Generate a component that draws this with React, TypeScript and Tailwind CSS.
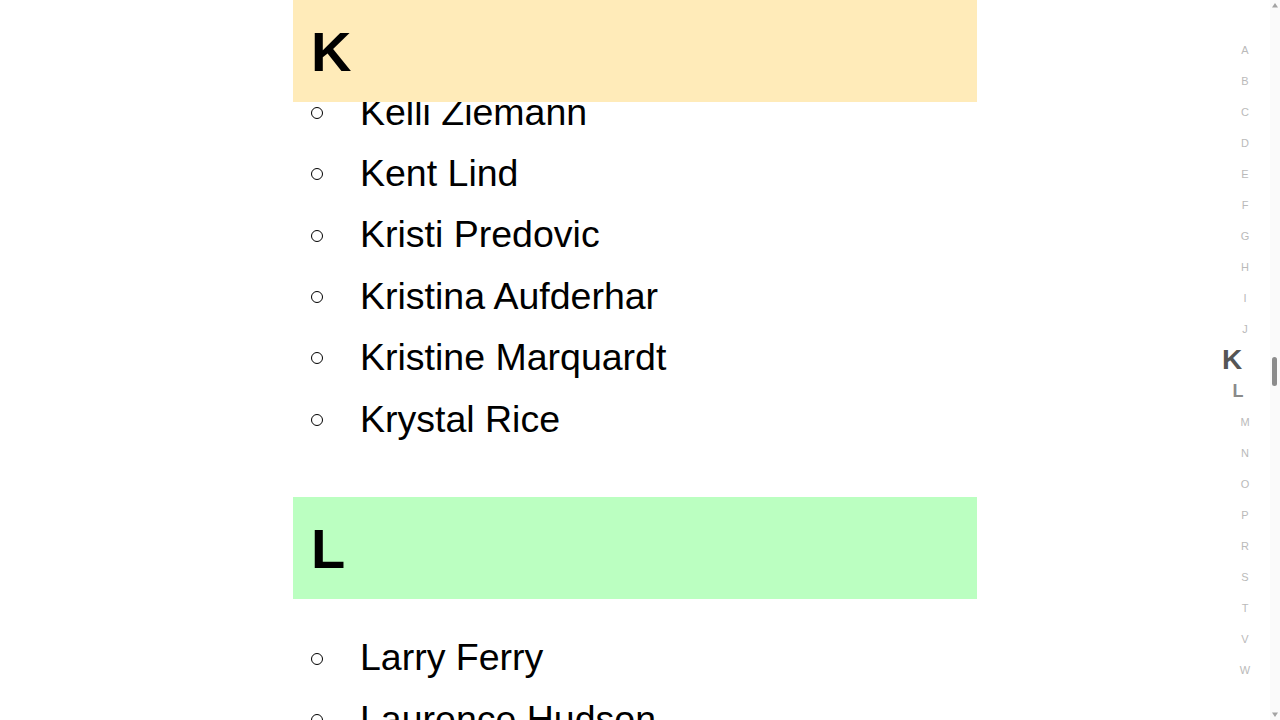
import { useLayoutEffect, useRef } from "react";

type Section = { letter: string; bg: string; names: string[] };

const sections: Section[] = [
  {
    letter: "K",
    bg: "bg-[#ffebb9]",
    names: [
      "Karen Schinner",
      "Karl Jakubowski",
      "Katherine Kuvalis",
      "Kelley Gusikowski",
      "Kelli Ziemann",
      "Kent Lind",
      "Kristi Predovic",
      "Kristina Aufderhar",
      "Kristine Marquardt",
      "Krystal Rice",
    ],
  },
  {
    letter: "L",
    bg: "bg-[#bbffc1]",
    names: [
      "Larry Ferry",
      "Laurence Hudson",
      "Leah Kuhn",
      "Leland Moen",
      "Lester Wiza",
      "Lillian Dach",
      "Lois Gutmann",
      "Lorena Bahringer",
    ],
  },
  {
    letter: "M",
    bg: "bg-[#c9e4ff]",
    names: ["Mabel Hartmann", "Marcus Runolfsson", "Marion Kozey", "Maurice Heller", "Melba Stehr"],
  },
];

const index = ["A", "B", "C", "D", "E", "F", "G", "H", "I", "J", "K", "L", "M", "N", "O", "P", "R", "S", "T", "V", "W"];

function IndexLetter({ letter }: { letter: string }) {
  if (letter === "K") {
    return (
      <div className="flex h-[31px] items-center justify-center">
        <span className="-translate-x-[13px] text-[28px] font-bold leading-none text-[#555555]">K</span>
      </div>
    );
  }
  if (letter === "L") {
    return (
      <div className="flex h-[31px] items-center justify-center">
        <span className="-translate-x-[7px] text-[18px] font-bold leading-none text-[#8a8a8a]">L</span>
      </div>
    );
  }
  return (
    <div className="flex h-[31px] items-center justify-center">
      <span className="text-[11px] leading-none text-[#bababa]">{letter}</span>
    </div>
  );
}

export default function App() {
  const scroller = useRef<HTMLDivElement>(null);

  // Open the directory scrolled into the K group, with the group header pinned.
  useLayoutEffect(() => {
    const box = scroller.current;
    if (!box) return;
    const row = box.querySelector<HTMLElement>('[data-name="Kelli Ziemann"]');
    if (!row) return;
    const delta = row.getBoundingClientRect().top - box.getBoundingClientRect().top;
    box.scrollTop = box.scrollTop + delta - 81.3;
  }, []);

  return (
    <div className="flex h-screen w-full overflow-hidden bg-white font-['Liberation_Sans',Arial,sans-serif] text-black">
      <div className="relative flex-1">
        <div ref={scroller} className="h-full overflow-y-auto [scrollbar-width:none]">
          <div className="mx-auto w-[684px] pb-[400px]">
            {sections.map((s) => (
              <section key={s.letter}>
                <h2
                  className={`sticky top-0 z-10 flex h-[102px] items-center pl-[18px] pr-4 pt-[2px] text-[56px] font-bold leading-[64px] ${s.bg}`}
                >
                  {s.letter}
                </h2>
                <ul className="pt-[28px] pb-[47.3px]">
                  {s.names.map((n) => (
                    <li
                      key={n}
                      data-name={n}
                      className="flex items-center pl-[18px] text-[37.5px] leading-[61.4px]"
                    >
                      <span className="mt-[1px] h-[12px] w-[12px] shrink-0 rounded-full border border-black" />
                      <span className="ml-[37px] whitespace-nowrap">{n}</span>
                    </li>
                  ))}
                </ul>
              </section>
            ))}
          </div>
        </div>

        <nav className="absolute right-[10px] top-0 flex h-full w-[30px] flex-col justify-center">
          {index.map((l) => (
            <IndexLetter key={l} letter={l} />
          ))}
        </nav>
      </div>

      <div className="relative w-[10px] bg-[#fafafa]">
        <svg className="absolute left-[2px] top-[3px]" width="6" height="5" viewBox="0 0 6 5">
          <path d="M3 0 L6 4.5 L0 4.5 Z" fill="#a3a3a3" />
        </svg>
        <div className="absolute left-[2px] top-[357px] h-[29px] w-[5px] rounded-full bg-[#8c8c8c]" />
        <svg className="absolute bottom-[3px] left-[2px]" width="6" height="5" viewBox="0 0 6 5">
          <path d="M0 0.5 L6 0.5 L3 5 Z" fill="#a3a3a3" />
        </svg>
      </div>
    </div>
  );
}
